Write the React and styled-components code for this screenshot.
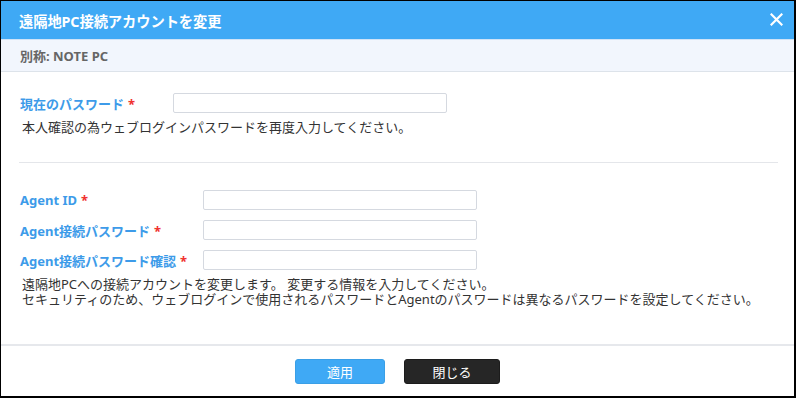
import React from 'react';
import styled, { createGlobalStyle } from 'styled-components';

const GlobalStyle = createGlobalStyle`
    html, body {
        margin: 0;
        padding: 0;
        background: #ffffff;
    }
    body {
        font-family: "Noto Sans", "Noto Sans CJK JP", sans-serif;
    }
`;

const fields = [
    { id: 'agentId', label: 'Agent ID' },
    { id: 'agentPw', label: 'Agent接続パスワード' },
    { id: 'agentPwConfirm', label: 'Agent接続パスワード確認' },
];

export default function App() {
    return (
        <>
            <GlobalStyle />
            <Dialog>
                <Header>
                    <Title>遠隔地PC接続アカウントを変更</Title>
                    <CloseButton aria-label="close">
                        <svg width="13" height="13" viewBox="0 0 13 13">
                            <path d="M1.5 1.5 L11.5 11.5 M11.5 1.5 L1.5 11.5" stroke="#fff" strokeWidth="2.2" strokeLinecap="square" />
                        </svg>
                    </CloseButton>
                </Header>
                <SubHeader>別称: NOTE PC</SubHeader>

                <Body>
                    <Section>
                        <FieldRow $labelWidth={153}>
                            <Label>現在のパスワード<Required>*</Required></Label>
                            <Input type="password" />
                        </FieldRow>
                        <Help>本人確認の為ウェブログインパスワードを再度入力してください。</Help>
                    </Section>

                    <Divider />

                    <Section $top={27}>
                        <Fields>
                            {fields.map(f => (
                                <FieldRow key={f.id} $labelWidth={183}>
                                    <Label>{f.label}<Required>*</Required></Label>
                                    <Input type={f.id === 'agentId' ? 'text' : 'password'} />
                                </FieldRow>
                            ))}
                        </Fields>
                        <Help>
                            遠隔地PCへの接続アカウントを変更します。 変更する情報を入力してください。<br />
                            セキュリティのため、ウェブログインで使用されるパスワードとAgentのパスワードは異なるパスワードを設定してください。
                        </Help>
                    </Section>
                </Body>

                <Footer>
                    <Button $variant="primary" $width={90}>適用</Button>
                    <Button $variant="dark" $width={96}>閉じる</Button>
                </Footer>
            </Dialog>
        </>
    );
}

const Dialog = styled.div`
    box-sizing: border-box;
    width: 796px;
    height: 398px;
    border-style: solid;
    border-color: #000;
    border-width: 1px 2px 2px 1px;
    display: flex;
    flex-direction: column;
    background: #fff;
    overflow: hidden;
`;

const Header = styled.div`
    height: 38px;
    flex-shrink: 0;
    background: #3fa9f5;
    display: flex;
    align-items: center;
    justify-content: space-between;
    padding: 0 11px 0 18px;
`;

const Title = styled.div`
    color: #fff;
    font-size: 14.3px;
    font-weight: 700;
    letter-spacing: -0.1px;
`;

const CloseButton = styled.button`
    border: none;
    background: none;
    padding: 0;
    width: 14px;
    height: 14px;
    display: flex;
    align-items: center;
    justify-content: center;
    margin-top: -1px;
`;

const SubHeader = styled.div`
    height: 33px;
    flex-shrink: 0;
    box-sizing: border-box;
    background: #f2f6fd;
    border-top: 1px solid #cfe3f7;
    border-bottom: 1px solid #dde3ea;
    display: flex;
    align-items: center;
    padding-left: 19px;
    color: #666;
    font-size: 13px;
    font-weight: 700;
`;

const Body = styled.div`
    flex: 1;
    padding: 21px 16px 0 18px;
    display: flex;
    flex-direction: column;
`;

const Section = styled.div`
    padding-left: 1px;
    margin-top: ${p => (p.$top ? p.$top + 'px' : '0')};
`;

const Fields = styled.div`
    display: flex;
    flex-direction: column;
    gap: 10px;
`;

const FieldRow = styled.div`
    display: grid;
    grid-template-columns: ${p => p.$labelWidth}px 274px;
    align-items: center;
    height: 20px;
`;

const Label = styled.label`
    color: #3d9be9;
    font-size: 13px;
    font-weight: 700;
    white-space: nowrap;
`;

const Required = styled.span`
    color: #f0312f;
    margin-left: 4px;
`;

const Input = styled.input`
    box-sizing: border-box;
    width: 274px;
    height: 20px;
    border: 1px solid #d5d9e0;
    border-radius: 2px;
    outline: none;
    padding: 0 4px;
`;

const Help = styled.p`
    margin: 7px 0 0 2px;
    color: #333;
    font-size: 13px;
    line-height: 15px;
    white-space: nowrap;
`;

const Divider = styled.div`
    height: 1px;
    background: #e4e6ea;
    margin-top: 27px;
`;

const Footer = styled.div`
    box-sizing: border-box;
    height: 52px;
    flex-shrink: 0;
    border-top: 2px solid #e6e8ec;
    display: flex;
    justify-content: center;
    align-items: flex-start;
    padding-top: 13px;
    gap: 19px;
`;

const Button = styled.button`
    width: ${p => p.$width}px;
    height: 25px;
    border-radius: 3px;
    font-family: inherit;
    font-size: 13px;
    color: #fff;
    cursor: pointer;
    border: 1px solid ${p => (p.$variant === 'primary' ? '#3a9fe6' : '#1c1c1c')};
    background: ${p => (p.$variant === 'primary' ? '#3fa9f5' : '#262626')};
`;
